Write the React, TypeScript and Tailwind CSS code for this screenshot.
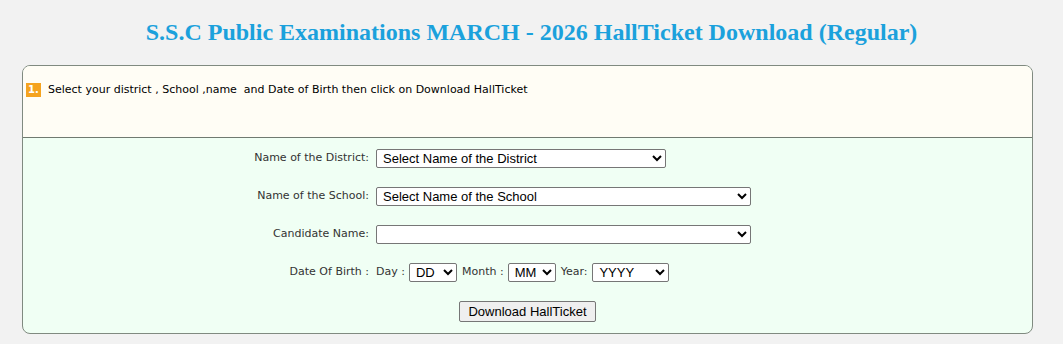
import React from 'react';

const LABEL = 'text-[11px] text-[#333] whitespace-pre';
const SELECT =
  'h-[19px] border border-[#767676] rounded-[2px] bg-white text-[13px] text-black pl-[2px]';
const ARIAL = { fontFamily: '"Liberation Sans", Arial, sans-serif' };

function Row({ label, children }: { label: string; children: React.ReactNode }) {
  return (
    <div className="flex items-center">
      <div className={`w-[353px] pr-[7px] text-right ${LABEL}`}>{label}</div>
      <div className="flex items-center">{children}</div>
    </div>
  );
}

export default function App() {
  return (
    <div
      className="min-h-[344px] w-full bg-[#f2f2f2] pb-[10px]"
      style={{ fontFamily: '"DejaVu Sans", Verdana, sans-serif' }}
    >
      {/* Title */}
      <h1
        className="pt-[17px] pb-[18px] text-center text-[24px] font-bold leading-[30px] text-[#1ba1dc]"
        style={{ fontFamily: '"Liberation Serif", "Times New Roman", serif' }}
      >
        S.S.C Public Examinations MARCH - 2026 HallTicket Download (Regular)
      </h1>

      {/* Panel */}
      <div className="mx-[22px] w-[1011px] overflow-hidden rounded-[8px] border border-[#808a80] bg-[#f0fff4]">
        <div className="h-[72px] border-b border-[#707a70] bg-[#fffdf5] px-[3px] pt-[16px]">
          <div className="flex items-center gap-[7px]">
            <span className="flex h-[14px] w-[15px] items-center justify-center bg-[#f5a31f] text-[10px] font-bold leading-none text-white">
              1.
            </span>
            <span className={LABEL + ' text-black'}>
              Select your district , School ,name  and Date of Birth then click on Download HallTicket
            </span>
          </div>
        </div>

        <div className="flex flex-col gap-[19px] pt-[11px] pb-[11px]">
          <Row label="Name of the District:">
            <select className={`${SELECT} w-[290px]`} style={ARIAL}>
              <option>Select Name of the District</option>
            </select>
          </Row>
          <Row label="Name of the School:">
            <select className={`${SELECT} w-[375px]`} style={ARIAL}>
              <option>Select Name of the School</option>
            </select>
          </Row>
          <Row label="Candidate Name:">
            <select className={`${SELECT} w-[375px]`} style={ARIAL}>
              <option></option>
            </select>
          </Row>
          <Row label="Date Of Birth :">
            <span className={`${LABEL} mr-[4px]`}>Day :</span>
            <select className={`${SELECT} w-[48px]`} style={ARIAL}>
              <option>DD</option>
            </select>
            <span className={`${LABEL} ml-[5px] mr-[4px]`}>Month :</span>
            <select className={`${SELECT} w-[48px]`} style={ARIAL}>
              <option>MM</option>
            </select>
            <span className={`${LABEL} ml-[5px] mr-[5px]`}>Year:</span>
            <select className={`${SELECT} w-[77px]`} style={ARIAL}>
              <option>YYYY</option>
            </select>
          </Row>
          <div className="flex justify-center">
            <button
              className="h-[21px] rounded-[2px] border border-[#767676] bg-[#efefef] px-[8px] text-[13px] leading-none text-black"
              style={ARIAL}
            >
              Download HallTicket
            </button>
          </div>
        </div>
      </div>
    </div>
  );
}
